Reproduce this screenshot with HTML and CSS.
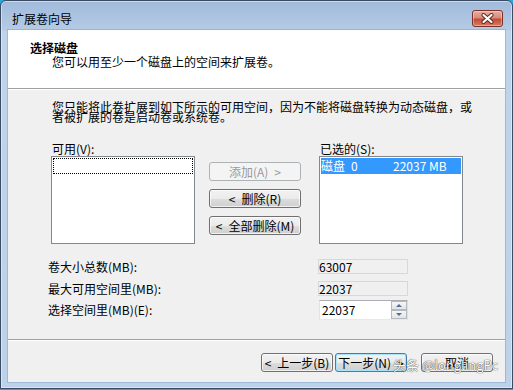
FILE: index.html
```html
<!DOCTYPE html>
<html lang="zh-CN">
<head>
<meta charset="utf-8">
<title>扩展卷向导</title>
<link rel="stylesheet" href="styles.css">
</head>
<body>
<div class="window">
  <div class="titlebar">
    <span class="title">扩展卷向导</span>
    <div class="close">
      <svg width="13" height="11" viewBox="0 0 13 11">
        <path d="M2.5 2 L10.5 9 M10.5 2 L2.5 9" stroke="#5b2620" stroke-width="4" stroke-linecap="round" fill="none"/>
        <path d="M2.5 2 L10.5 9 M10.5 2 L2.5 9" stroke="#ffffff" stroke-width="2.2" stroke-linecap="round" fill="none"/>
      </svg>
    </div>
  </div>
  <div class="client">
    <div class="header">
      <div class="h-title">选择磁盘</div>
      <div class="h-sub">您可以用至少一个磁盘上的空间来扩展卷。</div>
    </div>
    <div class="body">
      <p class="intro">您只能将此卷扩展到如下所示的可用空间，因为不能将磁盘转换为动态磁盘，或者被扩展的卷是启动卷或系统卷。</p>
      <div class="pickers">
        <div class="col">
          <div class="lbl">可用(V):</div>
          <div class="listbox"><div class="item focus"></div></div>
        </div>
        <div class="btncol">
          <div class="btn disabled">添加(A)&ensp;&gt;</div>
          <div class="btn">&lt;&ensp;删除(R)</div>
          <div class="btn">&lt;&ensp;全部删除(M)</div>
        </div>
        <div class="col">
          <div class="lbl">已选的(S):</div>
          <div class="listbox"><div class="item sel"><span class="c1">磁盘&ensp;0</span><span>22037 MB</span></div></div>
        </div>
      </div>
      <div class="fields">
        <div class="frow"><span class="flbl">卷大小总数(MB):</span><div class="ro">63007</div></div>
        <div class="frow r2"><span class="flbl">最大可用空间里(MB):</span><div class="ro">22037</div></div>
        <div class="frow r3"><span class="flbl">选择空间里(MB)(E):</span>
          <div class="spin"><span class="val">22037</span>
            <div class="arrows"><div class="arr"><i class="up"></i></div><div class="arr"><i class="down"></i></div></div>
          </div>
        </div>
      </div>
    </div>
    <div class="footer">
      <div class="btn fbtn back">&lt;&ensp;上一步(B)</div>
      <div class="btn fbtn next">下一步(N)&ensp;&gt;</div>
      <div class="btn fbtn">取消</div>
    </div>
  </div>
  <div class="watermark">头条 @longlingPc</div>
</div>
</body>
</html>
```
FILE: styles.css
```css
html, body {
  margin: 0;
  padding: 0;
}
body {
  width: 513px;
  height: 390px;
  overflow: hidden;
  background: #2aa6d8;
  font-family: "Noto Sans CJK SC", "Noto Sans", sans-serif;
  font-size: 12px;
  color: #000;
}
.window {
  position: relative;
  box-sizing: border-box;
  width: 513px;
  height: 389px;
  border: 1px solid #3a4b62;
  border-radius: 6px 6px 0 0;
  background: linear-gradient(#a1bada 0, #b5cbe6 29px, #bed4ec 30px, #bcd2eb 100%);
  box-shadow: inset 0 0 0 1px rgba(255, 255, 255, 0.45);
  display: flex;
  flex-direction: column;
}
.titlebar {
  height: 29px;
  flex: none;
  display: flex;
  justify-content: space-between;
  align-items: flex-start;
  padding: 0 9px 0 11px;
}
.title {
  margin-top: 11px;
  line-height: 14px;
  color: #000;
}
.close {
  margin-top: 9px;
  width: 31px;
  height: 17px;
  box-sizing: border-box;
  border: 1px solid #7b3029;
  border-radius: 3px;
  background: linear-gradient(#e6aea3 0%, #d98a7b 45%, #c44b36 55%, #d47d62 100%);
  box-shadow: inset 0 0 0 1px rgba(255, 255, 255, 0.35);
  display: flex;
  align-items: center;
  justify-content: center;
}
.client {
  flex: 1;
  margin: 0 7px 6px 7px;
  background: #f0f0f0;
  display: flex;
  flex-direction: column;
  box-shadow: 0 0 0 1px rgba(120, 150, 190, 0.45);
}
.header {
  box-sizing: border-box;
  height: 59px;
  flex: none;
  background: #fff;
  border-bottom: 1px solid #a0a0a0;
  padding: 11px 0 0 22px;
}
.h-title {
  font-weight: bold;
  line-height: 14px;
}
.h-sub {
  line-height: 14px;
  margin-left: 22px;
}
.body {
  flex: 1;
  border-top: 1px solid #fff;
  padding-top: 12px;
  display: flex;
  flex-direction: column;
}
.intro {
  margin: 0 0 0 44px;
  width: 425px;
  line-height: 10px;
}
.pickers {
  display: flex;
  align-items: flex-start;
  margin: 19px 0 0 43px;
}
.col {
  width: 144px;
}
.lbl {
  height: 15px;
  line-height: 15px;
  padding-left: 1px;
}
.listbox {
  box-sizing: border-box;
  height: 88px;
  background: #fff;
  border: 1px solid #828790;
  padding: 1px;
}
.item {
  box-sizing: border-box;
  height: 16px;
  line-height: 14px;
}
.item.focus {
  border: 1px dotted #000;
}
.item.sel {
  display: flex;
  background: #3399ff;
  color: #fff;
  line-height: 16px;
}
.item.sel .c1 {
  width: 72px;
}
.btncol {
  width: 92px;
  margin: 21px 18px 0 14px;
  display: flex;
  flex-direction: column;
  gap: 8px;
}
.btn {
  box-sizing: border-box;
  height: 19px;
  border: 1px solid #707070;
  border-radius: 3px;
  background: linear-gradient(#f2f2f2 0%, #ebebeb 50%, #dddddd 51%, #cfcfcf 100%);
  box-shadow: inset 0 0 0 1px rgba(255, 255, 255, 0.7);
  text-align: center;
  line-height: 17px;
  white-space: nowrap;
}
.btn.disabled {
  border-color: #adb2b5;
  background: #f4f4f4;
  color: #9a9a9a;
  box-shadow: none;
}
.fields {
  margin: 15px 0 0 40px;
}
.frow {
  display: flex;
  align-items: center;
}
.frow.r2 {
  margin-top: 7px;
}
.frow.r3 {
  margin-top: 4px;
}
.flbl {
  width: 270px;
  line-height: 14px;
}
.ro {
  box-sizing: border-box;
  width: 90px;
  height: 15px;
  border: 1px solid #d8d8d8;
  background: #f0f0f0;
  line-height: 13px;
}
.spin {
  box-sizing: border-box;
  margin-left: 1px;
  width: 89px;
  height: 20px;
  background: #fff;
  border: 1px solid;
  border-color: #abadb3 #dbdfe6 #e3e9ef #e2e3ea;
  display: flex;
}
.spin .val {
  flex: 1;
  padding-left: 2px;
  line-height: 18px;
}
.arrows {
  width: 16px;
  display: flex;
  flex-direction: column;
}
.arr {
  box-sizing: border-box;
  height: 9px;
  border: 1px solid #b4b9bf;
  background: linear-gradient(#f6f6f6, #e3e3e3);
  display: flex;
  align-items: center;
  justify-content: center;
}
.up {
  width: 0;
  height: 0;
  border-left: 3px solid transparent;
  border-right: 3px solid transparent;
  border-bottom: 3px solid #4d6e9e;
}
.down {
  width: 0;
  height: 0;
  border-left: 3px solid transparent;
  border-right: 3px solid transparent;
  border-top: 3px solid #4d6e9e;
}
.footer {
  box-sizing: border-box;
  height: 43px;
  flex: none;
  border-top: 1px solid #a0a0a0;
  box-shadow: inset 0 1px 0 #fff;
  display: flex;
  justify-content: flex-end;
  padding: 13px 12px 0 0;
}
.fbtn {
  width: 72px;
}
.fbtn.back {
  margin-right: 2px;
}
.fbtn.next {
  margin-right: 14px;
  border-color: #3c7fb1;
  box-shadow: inset 0 0 0 1px #a8e2fb;
}
.watermark {
  position: absolute;
  left: 392px;
  top: 356px;
  font-size: 13px;
  line-height: 16px;
  color: #fafafa;
  text-shadow: 0 0 1px rgba(0, 0, 0, 0.75), 0 0 1px rgba(0, 0, 0, 0.5);
  white-space: nowrap;
}
```
